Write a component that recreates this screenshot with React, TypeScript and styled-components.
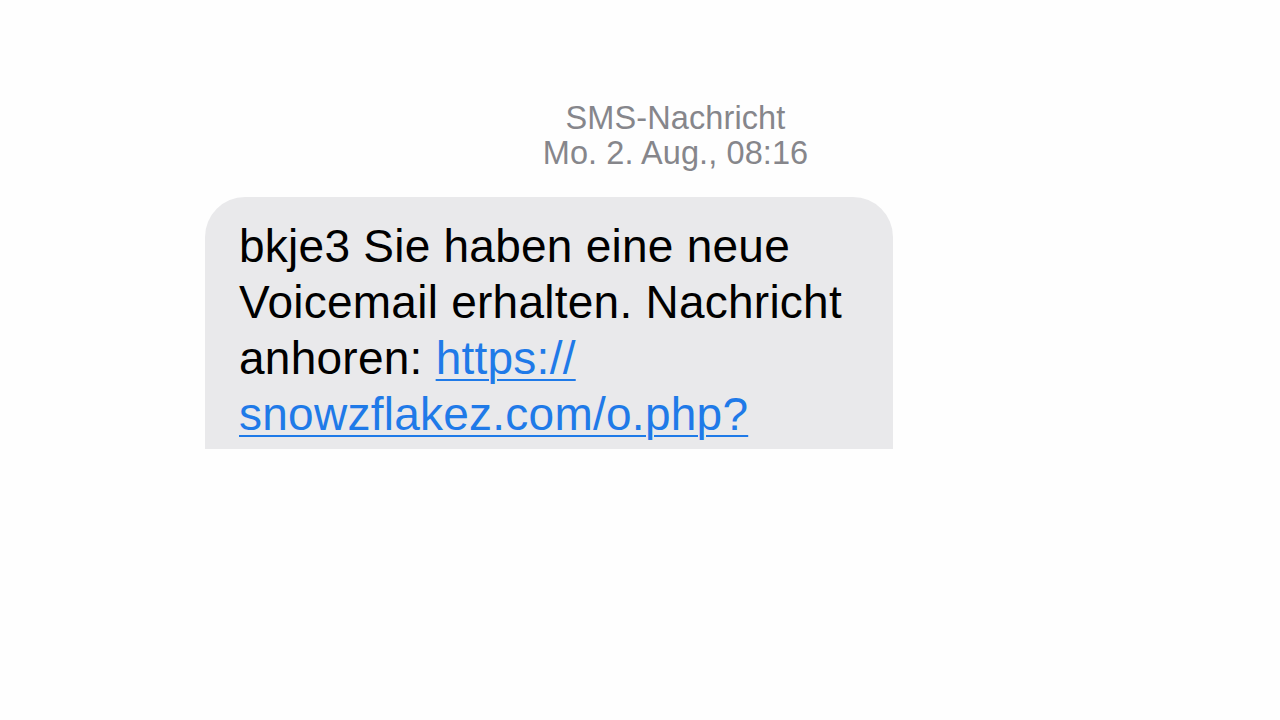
import React from "react";
import styled, { createGlobalStyle } from "styled-components";

const Global = createGlobalStyle`
  html, body {
    margin: 0;
    padding: 0;
    background: #fefefe;
  }
  body {
    font-family: "Liberation Sans", Arial, sans-serif;
  }
`;

const Screen = styled.div`
  width: 1280px;
  height: 720px;
  box-sizing: border-box;
  padding-top: 101px;
  display: flex;
  flex-direction: column;
  background: #fefefe;
  overflow: hidden;
`;

const Header = styled.div`
  padding-left: 71px;
  text-align: center;
  color: #86868b;
  font-size: 32.5px;
  line-height: 35px;
  letter-spacing: 0.1px;
`;

const HeaderLine = styled.div``;

const Row = styled.div`
  margin-top: 26px;
  padding-left: 205px;
  display: flex;
`;

const Bubble = styled.div`
  width: 688px;
  height: 252px;
  box-sizing: border-box;
  padding: 21px 20px 0 34px;
  background: #e9e9eb;
  border-radius: 40px 40px 0 0;
  overflow: hidden;
  color: #000;
  font-size: 46px;
  line-height: 56px;
  letter-spacing: 0.25px;
`;

const Link = styled.a`
  color: #1f7ae8;
  text-decoration: underline;
  text-decoration-thickness: 2px;
  text-underline-offset: 5px;
`;

export default function App() {
  return (
    <>
      <Global />
      <Screen>
        <Header>
          <HeaderLine>SMS-Nachricht</HeaderLine>
          <HeaderLine>Mo. 2. Aug., 08:16</HeaderLine>
        </Header>
        <Row>
          <Bubble>
            bkje3 Sie haben eine neue
            <br />
            Voicemail erhalten. Nachricht
            <br />
            anhoren: <Link>https://</Link>
            <br />
            <Link>snowzflakez.com/o.php?</Link>
          </Bubble>
        </Row>
      </Screen>
    </>
  );
}
